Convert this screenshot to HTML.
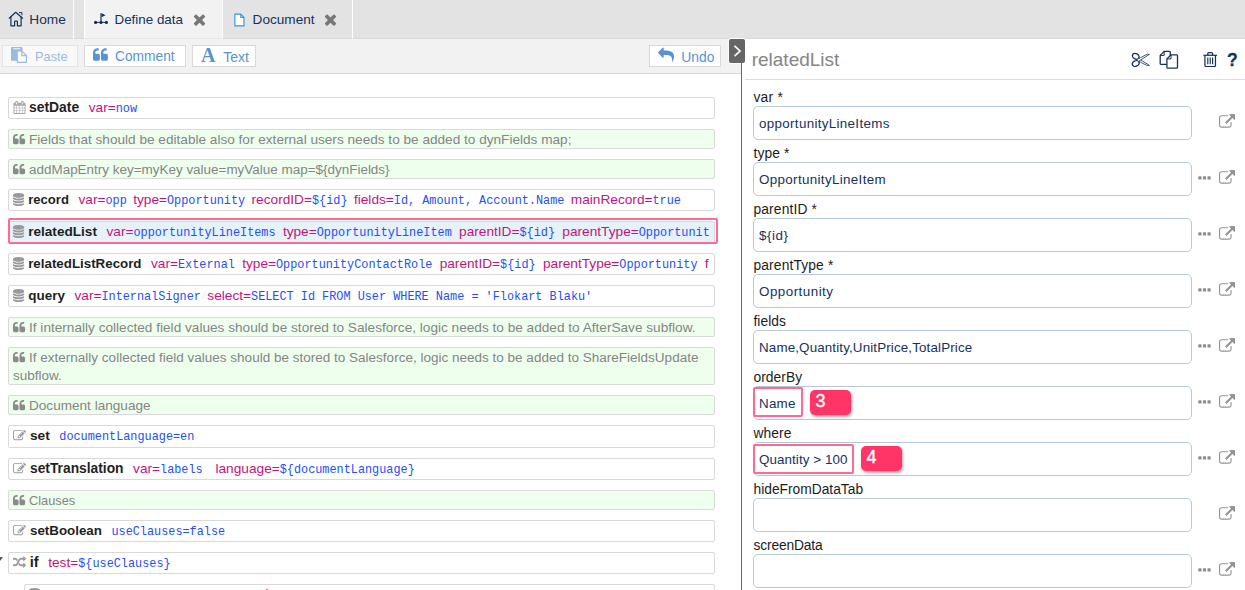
<!DOCTYPE html>
<html lang="en">
<head>
<meta charset="utf-8">
<title>Define data</title>
<style>
*{box-sizing:border-box;margin:0;padding:0}
html,body{width:1245px;height:590px;overflow:hidden;background:#fff}
body{position:relative;font-family:"Liberation Sans",sans-serif;font-size:13px;color:#222}
svg{display:block}
.abs{position:absolute}
#tabs{position:absolute;left:0;top:0;width:1245px;height:39px;background:#e3e3e3}
.tab{position:absolute;top:0;height:39px}
.tab.active{background:#f2f2f2}
.tab .lbl{position:absolute;top:11px;font-size:13.4px;line-height:18px;color:#16325c;white-space:nowrap}
#toolbar{position:absolute;left:0;top:39px;width:741px;height:34px;background:#f2f2f2}
#tline{position:absolute;left:0;top:38px;width:1245px;height:1px;background:rgba(0,0,0,.045)}
#bline{position:absolute;left:0;top:73px;width:741px;height:1px;background:#d8d8d8}
.btn{position:absolute;top:6px;height:22px;background:#fff;border:1px solid #d9d9d9;color:#5b92d4;font-size:13.5px;line-height:20px;white-space:nowrap}
.btn span{position:absolute;top:1px}
.btn.dis{opacity:.58}
.row{position:absolute;left:8px;width:707px;height:22px;border:1px solid #d9d9d9;border-radius:2px;background:#fff;white-space:nowrap;overflow:hidden}
.row.cm{height:20px;background:#eeffee;color:#858585}
.row.cm .t{position:absolute;left:4px;top:1px;line-height:18px;font-size:13.35px;white-space:normal;width:700px;text-indent:16px}
.row .l{position:absolute;left:19.6px;top:0;height:20px;line-height:19px;white-space:nowrap}
.row .n{font-weight:bold;font-size:13.6px;color:#1f1f1f;margin-right:9.5px}
.row .a{font-size:13.68px;color:#c2157c;margin-right:6.4px}
.row .a b{font-weight:normal;font-family:"Liberation Mono","DejaVu Sans Mono",monospace;font-size:11.85px;color:#2450f5}
.row.g7 .a{margin-right:7.3px}
.row.sel{background:#e6f1fa}
#title{position:absolute;left:751.7px;top:48px;font-size:19px;line-height:24px;color:#858585}
.lab{position:absolute;left:753.5px;font-size:13.8px;line-height:16px;color:#1c1c1c;white-space:nowrap}
.inp{position:absolute;left:753px;width:439px;height:34px;border:1px solid #b6c8d4;border-radius:5px;background:#fff;font-size:13.4px;line-height:32px;padding-left:5px;padding-top:0.5px;color:#16325c;white-space:nowrap}
.badge{position:absolute;width:41px;height:25px;border-radius:5px;background:#ff3567;color:#fff;font-size:18px;line-height:23px;padding-left:5.5px;-webkit-text-stroke:0.35px #fff;box-shadow:1px 2px 3px rgba(0,0,0,.35)}
.hl{position:absolute;border:2px solid #ff6b90;border-radius:2px}
</style>
</head>
<body>
<div id="tabs">
<div class="tab" style="left:0;width:74px;border-right:1px solid #fff">
<svg class="abs" style="left:8px;top:11px" width="16" height="17" viewBox="0 0 16 17" fill="none" stroke="#16325c" stroke-width="1.2" stroke-linejoin="round" stroke-linecap="round"><path d="M1.2 7.2 L7.7 1.3 L14.6 7.2"/><path d="M2.9 5.9 V14.8 H6.6 V10.8 a0.7 0.7 0 0 1 0.7 -0.7 H8.7 a0.7 0.7 0 0 1 0.7 0.7 V14.8 H13.1 V5.9"/><path d="M11.4 1.6 H13.9 V3.8" stroke-width="1"/></svg>
<span class="lbl" style="left:29.3px;font-size:13.7px">Home</span></div>
<div class="tab active" style="left:84px;width:139px;border-left:1px solid #fff;border-right:1px solid #fff">
<svg class="abs" style="left:9px;top:12px" width="15" height="13" viewBox="0 0 15 13"><g fill="#16325c"><circle cx="1.6" cy="10.4" r="1.6"/><circle cx="7" cy="10.4" r="1.6"/><circle cx="12.4" cy="10.4" r="1.6"/><rect x="1.5" y="9.9" width="11" height="1"/><rect x="6.4" y="1.2" width="1.2" height="9.3"/><path d="M7.5 1.2 L11.6 3.2 L7.5 5.3 Z"/></g></svg>
<span class="lbl" style="left:29.5px">Define data</span>
<svg class="abs" style="left:105.6px;top:10.9px" width="17" height="17" viewBox="0 0 1792 1792"><path fill="#777" d="M1490 1322q0 40-28 68l-136 136q-28 28-68 28t-68-28l-294-294-294 294q-28 28-68 28t-68-28l-136-136q-28-28-28-68t28-68l294-294-294-294q-28-28-28-68t28-68l136-136q28-28 68-28t68 28l294 294 294-294q28-28 68-28t68 28l136 136q28 28 28 68t-28 68l-294 294 294 294q28 28 28 68z"/></svg></div>
<div class="tab" style="left:222px;width:131px;border-left:1px solid #fff;border-right:1px solid #fff">
<svg class="abs" style="left:10px;top:12.5px" width="13" height="15" viewBox="0 0 13 15.8" fill="#fff" stroke="#2f96d8" stroke-width="1.2" stroke-linejoin="round"><path d="M1.6 1.2 H7.8 L11.2 4.6 V13.6 H1.6 Z"/><path d="M7.8 1.2 V4.6 H11.2" fill="none"/></svg>
<span class="lbl" style="left:29.6px;font-size:13.6px">Document</span>
<svg class="abs" style="left:99.2px;top:10.9px" width="17" height="17" viewBox="0 0 1792 1792"><path fill="#777" d="M1490 1322q0 40-28 68l-136 136q-28 28-68 28t-68-28l-294-294-294 294q-28 28-68 28t-68-28l-136-136q-28-28-28-68t28-68l294-294-294-294q-28-28-28-68t28-68l136-136q28-28 68-28t68 28l294 294 294-294q28-28 68-28t68 28l136 136q28 28 28 68t-28 68l-294 294 294 294q28 28 28 68z"/></svg></div>
</div>
<div id="toolbar">
<div class="btn dis" style="left:2px;width:76px"><svg class="abs" style="left:8px;top:1px" width="16" height="16" viewBox="0 0 1792 1792"><path fill="#5b92d4" d="M768 1664h896v-640h-416q-40 0-68-28t-28-68v-416h-384v1152zm256-1440v-64q0-13-9.500-22.500t-22.500-9.500h-704q-13 0-22.500 9.500t-9.500 22.500v64q0 13 9.500 22.500t22.500 9.500h704q13 0 22.500-9.500t9.500-22.500zm256 672h299l-299-299v299zm512 128v672q0 40-28 68t-68 28h-960q-40 0-68-28t-28-68v-160h-544q-40 0-68-28t-28-68v-1344q0-40 28-68t68-28h1088q40 0 68 28t28 68v328q21 13 36 28l408 408q28 28 48 76t20 88z"/></svg><span style="left:32px;font-size:12.8px">Paste</span></div>
<div class="btn" style="left:84px;width:102px"><svg class="abs" style="left:8px;top:1px" width="16" height="16" viewBox="0 0 1792 1792"><path fill="#5b92d4" d="M768 960v384q0 80-56 136t-136 56h-384q-80 0-136-56t-56-136v-704q0-104 40.500-198.500t109.500-163.500 163.500-109.500 198.500-40.500h64q26 0 45 19t19 45v128q0 26-19 45t-45 19h-64q-106 0-181 75t-75 181v32q0 40 28 68t68 28h224q80 0 136 56t56 136zM1664 960v384q0 80-56 136t-136 56h-384q-80 0-136-56t-56-136v-704q0-104 40.500-198.500t109.500-163.500 163.500-109.500 198.500-40.500h64q26 0 45 19t19 45v128q0 26-19 45t-45 19h-64q-106 0-181 75t-75 181v32q0 40 28 68t68 28h224q80 0 136 56t56 136z"/></svg><span style="left:30px;font-size:13.75px">Comment</span></div>
<div class="btn" style="left:192px;width:64px"><span style="left:8px;top:-2px;font-family:'Liberation Serif',serif;font-weight:bold;font-size:20px;line-height:22px">A</span><span style="left:30.3px;font-size:14px">Text</span></div>
<div class="btn" style="left:649px;width:72px"><svg class="abs" style="left:7.5px;top:1px" width="16" height="16" viewBox="0 0 1792 1792"><path fill="#5b92d4" d="M1792 1120q0 166-127 451-3 7-10.500 24t-13.500 30-13 22q-12 17-28 17-15 0-23.500-10t-8.500-25q0-9 2.500-26.500t2.500-23.500q5-68 5-123 0-101-17.500-181t-48.500-138.500-80-101-105.500-69.500-133-42.500-154-21.500-175.500-6h-224v256q0 26-19 45t-45 19-45-19l-512-512q-19-19-19-45t19-45l512-512q19-19 45-19t45 19 19 45v256h224q713 0 875 403 53 134 53 333z"/></svg><span style="left:31.3px;font-size:13.9px">Undo</span></div>
</div>
<div id="tline"></div><div id="bline"></div>
<div class="abs" style="left:729px;top:39px;width:16px;height:24px;background:#666;border-radius:2px;box-shadow:0 0 0 1px #fff">
<svg style="position:absolute;left:4px;top:6px" width="9" height="12" viewBox="0 0 9 12" fill="none" stroke="#fff" stroke-width="1.7"><path d="M1.5 0.8 L7 6 L1.5 11.2"/></svg></div>
<div class="abs" style="left:741px;top:62px;width:1px;height:528px;background:#686868"></div>
<div id="left">
<div class="row" style="top:97px"><svg class="abs" style="left:4px;top:3px" width="13" height="13" viewBox="0 0 1792 1792"><path fill="#a6a6a6" d="M192 1664h288v-288h-288v288zm352 0h320v-288h-320v288zm-352-352h288v-320h-288v320zm352 0h320v-320h-320v320zm-352-384h288v-288h-288v288zm736 736h320v-288h-320v288zm-384-736h320v-288h-320v288zm768 736h288v-288h-288v288zm-384-352h320v-320h-320v320zm-352-864v-288q0-13-9.500-22.500t-22.500-9.500h-64q-13 0-22.500 9.500t-9.500 22.500v288q0 13 9.500 22.500t22.500 9.500h64q13 0 22.500-9.500t9.500-22.500zm736 864h288v-320h-288v320zm-384-384h320v-288h-320v288zm384 0h288v-288h-288v288zm32-480v-288q0-13-9.500-22.500t-22.500-9.500h-64q-13 0-22.500 9.500t-9.500 22.500v288q0 13 9.500 22.500t22.500 9.500h64q13 0 22.500-9.500t9.500-22.500zm384-64v1280q0 52-38 90t-90 38h-1408q-52 0-90-38t-38-90v-1280q0-52 38-90t90-38h128v-96q0-66 47-113t113-47h64q66 0 113 47t47 113v96h384v-96q0-66 47-113t113-47h64q66 0 113 47t47 113v96h128q52 0 90 38t38 90z"/></svg><span class="l" style="left:20px"><span class="n" style="font-size:13.9px">setDate</span><span class="a">var=<b>now</b></span></span></div>
<div class="row cm" style="top:129px"><svg class="abs" style="left:4px;top:3px" width="13" height="13" viewBox="0 0 1792 1792"><path fill="#8a8a8a" d="M768 960v384q0 80-56 136t-136 56h-384q-80 0-136-56t-56-136v-704q0-104 40.500-198.500t109.500-163.500 163.500-109.500 198.500-40.500h64q26 0 45 19t19 45v128q0 26-19 45t-45 19h-64q-106 0-181 75t-75 181v32q0 40 28 68t68 28h224q80 0 136 56t56 136zM1664 960v384q0 80-56 136t-136 56h-384q-80 0-136-56t-56-136v-704q0-104 40.500-198.500t109.500-163.500 163.500-109.500 198.500-40.500h64q26 0 45 19t19 45v128q0 26-19 45t-45 19h-64q-106 0-181 75t-75 181v32q0 40 28 68t68 28h224q80 0 136 56t56 136z"/></svg><span class="t" style="font-size:13.61px">Fields that should be editable also for external users needs to be added to dynFields map;</span></div>
<div class="row cm" style="top:159px"><svg class="abs" style="left:4px;top:3px" width="13" height="13" viewBox="0 0 1792 1792"><path fill="#8a8a8a" d="M768 960v384q0 80-56 136t-136 56h-384q-80 0-136-56t-56-136v-704q0-104 40.500-198.500t109.500-163.500 163.500-109.500 198.500-40.500h64q26 0 45 19t19 45v128q0 26-19 45t-45 19h-64q-106 0-181 75t-75 181v32q0 40 28 68t68 28h224q80 0 136 56t56 136zM1664 960v384q0 80-56 136t-136 56h-384q-80 0-136-56t-56-136v-704q0-104 40.500-198.500t109.500-163.500 163.500-109.500 198.500-40.500h64q26 0 45 19t19 45v128q0 26-19 45t-45 19h-64q-106 0-181 75t-75 181v32q0 40 28 68t68 28h224q80 0 136 56t56 136z"/></svg><span class="t" style="font-size:13.46px">addMapEntry key=myKey value=myValue map=${dynFields}</span></div>
<div class="row" style="top:189px"><svg class="abs" style="left:4px;top:3px" width="13" height="13" viewBox="0 0 1792 1792"><path fill="#9a9a9a" d="M768 768q237 0 443-43t325-127v170q0 69-103 128t-280 93.500-385 34.500-385-34.500-280-93.500-103-128v-170q119 84 325 127t443 43zm0 768q237 0 443-43t325-127v170q0 69-103 128t-280 93.500-385 34.500-385-34.500-280-93.500-103-128v-170q119 84 325 127t443 43zm0-384q237 0 443-43t325-127v170q0 69-103 128t-280 93.500-385 34.500-385-34.500-280-93.500-103-128v-170q119 84 325 127t443 43zm0-1152q208 0 385 34.500t280 93.500 103 128v128q0 69-103 128t-280 93.500-385 34.500-385-34.500-280-93.500-103-128v-128q0-69 103-128t280-93.500 385-34.500z"/></svg><span class="l" style="left:19.2px"><span class="n" style="font-size:13.1px">record</span><span class="a">var=<b>opp</b></span><span class="a">type=<b>Opportunity</b></span><span class="a">recordID=<b>${id}</b></span><span class="a">fields=<b>Id, Amount, Account.Name</b></span><span class="a">mainRecord=<b>true</b></span></span></div>
<div class="row sel g7" style="top:221px"><svg class="abs" style="left:4px;top:3px" width="13" height="13" viewBox="0 0 1792 1792"><path fill="#9a9a9a" d="M768 768q237 0 443-43t325-127v170q0 69-103 128t-280 93.500-385 34.500-385-34.500-280-93.500-103-128v-170q119 84 325 127t443 43zm0 768q237 0 443-43t325-127v170q0 69-103 128t-280 93.500-385 34.500-385-34.500-280-93.500-103-128v-170q119 84 325 127t443 43zm0-384q237 0 443-43t325-127v170q0 69-103 128t-280 93.500-385 34.500-385-34.500-280-93.500-103-128v-170q119 84 325 127t443 43zm0-1152q208 0 385 34.500t280 93.500 103 128v128q0 69-103 128t-280 93.500-385 34.500-385-34.500-280-93.500-103-128v-128q0-69 103-128t280-93.500 385-34.500z"/></svg><span class="l" style="left:19.2px"><span class="n" style="font-size:13.6px">relatedList</span><span class="a">var=<b>opportunityLineItems</b></span><span class="a">type=<b>OpportunityLineItem</b></span><span class="a">parentID=<b>${id}</b></span><span class="a">parentType=<b>Opportunit</b></span></span></div>
<div class="row g7" style="top:253px"><svg class="abs" style="left:4px;top:3px" width="13" height="13" viewBox="0 0 1792 1792"><path fill="#9a9a9a" d="M768 768q237 0 443-43t325-127v170q0 69-103 128t-280 93.500-385 34.500-385-34.500-280-93.500-103-128v-170q119 84 325 127t443 43zm0 768q237 0 443-43t325-127v170q0 69-103 128t-280 93.500-385 34.500-385-34.500-280-93.500-103-128v-170q119 84 325 127t443 43zm0-384q237 0 443-43t325-127v170q0 69-103 128t-280 93.500-385 34.500-385-34.500-280-93.500-103-128v-170q119 84 325 127t443 43zm0-1152q208 0 385 34.500t280 93.500 103 128v128q0 69-103 128t-280 93.500-385 34.500-385-34.500-280-93.500-103-128v-128q0-69 103-128t280-93.500 385-34.500z"/></svg><span class="l" style="left:19.2px"><span class="n" style="font-size:13.33px">relatedListRecord</span><span class="a">var=<b>External</b></span><span class="a">type=<b>OpportunityContactRole</b></span><span class="a">parentID=<b>${id}</b></span><span class="a">parentType=<b>Opportunity</b></span><span class="a">f<b></b></span></span></div>
<div class="row" style="top:285px"><svg class="abs" style="left:4px;top:3px" width="13" height="13" viewBox="0 0 1792 1792"><path fill="#9a9a9a" d="M768 768q237 0 443-43t325-127v170q0 69-103 128t-280 93.500-385 34.500-385-34.500-280-93.500-103-128v-170q119 84 325 127t443 43zm0 768q237 0 443-43t325-127v170q0 69-103 128t-280 93.500-385 34.500-385-34.500-280-93.500-103-128v-170q119 84 325 127t443 43zm0-384q237 0 443-43t325-127v170q0 69-103 128t-280 93.500-385 34.500-385-34.500-280-93.500-103-128v-170q119 84 325 127t443 43zm0-1152q208 0 385 34.500t280 93.500 103 128v128q0 69-103 128t-280 93.500-385 34.500-385-34.500-280-93.500-103-128v-128q0-69 103-128t280-93.500 385-34.500z"/></svg><span class="l" style="left:19.2px"><span class="n" style="font-size:13.5px">query</span><span class="a">var=<b>InternalSigner</b></span><span class="a">select=<b>SELECT Id FROM User WHERE Name = 'Flokart Blaku'</b></span></span></div>
<div class="row cm" style="top:317px"><svg class="abs" style="left:4px;top:3px" width="13" height="13" viewBox="0 0 1792 1792"><path fill="#8a8a8a" d="M768 960v384q0 80-56 136t-136 56h-384q-80 0-136-56t-56-136v-704q0-104 40.500-198.500t109.500-163.500 163.500-109.500 198.500-40.500h64q26 0 45 19t19 45v128q0 26-19 45t-45 19h-64q-106 0-181 75t-75 181v32q0 40 28 68t68 28h224q80 0 136 56t56 136zM1664 960v384q0 80-56 136t-136 56h-384q-80 0-136-56t-56-136v-704q0-104 40.500-198.500t109.500-163.500 163.500-109.500 198.500-40.500h64q26 0 45 19t19 45v128q0 26-19 45t-45 19h-64q-106 0-181 75t-75 181v32q0 40 28 68t68 28h224q80 0 136 56t56 136z"/></svg><span class="t" style="font-size:13.63px">If internally collected field values should be stored to Salesforce, logic needs to be added to AfterSave subflow.</span></div>
<div class="row cm" style="top:347px;height:38px"><svg class="abs" style="left:4px;top:3px" width="13" height="13" viewBox="0 0 1792 1792"><path fill="#8a8a8a" d="M768 960v384q0 80-56 136t-136 56h-384q-80 0-136-56t-56-136v-704q0-104 40.500-198.500t109.500-163.500 163.500-109.500 198.500-40.500h64q26 0 45 19t19 45v128q0 26-19 45t-45 19h-64q-106 0-181 75t-75 181v32q0 40 28 68t68 28h224q80 0 136 56t56 136zM1664 960v384q0 80-56 136t-136 56h-384q-80 0-136-56t-56-136v-704q0-104 40.500-198.500t109.500-163.500 163.500-109.500 198.500-40.500h64q26 0 45 19t19 45v128q0 26-19 45t-45 19h-64q-106 0-181 75t-75 181v32q0 40 28 68t68 28h224q80 0 136 56t56 136z"/></svg><span class="t" style="font-size:13.53px">If externally collected field values should be stored to Salesforce, logic needs to be added to ShareFieldsUpdate subflow.</span></div>
<div class="row cm" style="top:395px"><svg class="abs" style="left:4px;top:3px" width="13" height="13" viewBox="0 0 1792 1792"><path fill="#8a8a8a" d="M768 960v384q0 80-56 136t-136 56h-384q-80 0-136-56t-56-136v-704q0-104 40.500-198.500t109.500-163.500 163.500-109.500 198.500-40.500h64q26 0 45 19t19 45v128q0 26-19 45t-45 19h-64q-106 0-181 75t-75 181v32q0 40 28 68t68 28h224q80 0 136 56t56 136zM1664 960v384q0 80-56 136t-136 56h-384q-80 0-136-56t-56-136v-704q0-104 40.500-198.500t109.500-163.500 163.500-109.500 198.500-40.500h64q26 0 45 19t19 45v128q0 26-19 45t-45 19h-64q-106 0-181 75t-75 181v32q0 40 28 68t68 28h224q80 0 136 56t56 136z"/></svg><span class="t" style="font-size:13.58px">Document language</span></div>
<div class="row" style="top:425px;height:23px"><svg class="abs" style="left:4px;top:3px" width="13" height="13" viewBox="0 0 1792 1792"><path fill="#9a9a9a" d="M888 1184l116-116-152-152-116 116v56h96v96h56zm440-720q-16-16-33 1l-350 350q-17 17-1 33t33-1l350-350q17-17 1-33zm80 594v190q0 119-84.500 203.500t-203.500 84.500h-832q-119 0-203.500-84.500t-84.500-203.500v-832q0-119 84.500-203.500t203.500-84.500h832q63 0 117 25 15 7 18 23 3 17-9 29l-49 49q-14 14-32 8-23-6-45-6h-832q-66 0-113 47t-47 113v832q0 66 47 113t113 47h832q66 0 113-47t47-113v-126q0-13 9-22l64-64q15-15 35-7t20 29zm-96-738l288 288-672 672h-288v-288zm444 132l-92 92-288-288 92-92q28-28 68-28t68 28l152 152q28 28 28 68t-28 68z"/></svg><span class="l" style="left:21px"><span class="n" style="font-size:13.7px">set</span><span class="a"><b>documentLanguage=en</b></span></span></div>
<div class="row" style="top:458px"><svg class="abs" style="left:4px;top:3px" width="13" height="13" viewBox="0 0 1792 1792"><path fill="#9a9a9a" d="M888 1184l116-116-152-152-116 116v56h96v96h56zm440-720q-16-16-33 1l-350 350q-17 17-1 33t33-1l350-350q17-17 1-33zm80 594v190q0 119-84.500 203.500t-203.500 84.500h-832q-119 0-203.500-84.500t-84.500-203.500v-832q0-119 84.500-203.500t203.500-84.500h832q63 0 117 25 15 7 18 23 3 17-9 29l-49 49q-14 14-32 8-23-6-45-6h-832q-66 0-113 47t-47 113v832q0 66 47 113t113 47h832q66 0 113-47t47-113v-126q0-13 9-22l64-64q15-15 35-7t20 29zm-96-738l288 288-672 672h-288v-288zm444 132l-92 92-288-288 92-92q28-28 68-28t68 28l152 152q28 28 28 68t-28 68z"/></svg><span class="l" style="left:21px"><span class="n" style="font-size:13.8px">setTranslation</span><span class="a">var=<b>labels</b></span><span class="a" style="margin-left:6.4px">language=<b>${documentLanguage}</b></span></span></div>
<div class="row cm" style="top:490px"><svg class="abs" style="left:4px;top:3px" width="13" height="13" viewBox="0 0 1792 1792"><path fill="#8a8a8a" d="M768 960v384q0 80-56 136t-136 56h-384q-80 0-136-56t-56-136v-704q0-104 40.500-198.500t109.500-163.500 163.500-109.500 198.500-40.500h64q26 0 45 19t19 45v128q0 26-19 45t-45 19h-64q-106 0-181 75t-75 181v32q0 40 28 68t68 28h224q80 0 136 56t56 136zM1664 960v384q0 80-56 136t-136 56h-384q-80 0-136-56t-56-136v-704q0-104 40.500-198.500t109.500-163.500 163.500-109.500 198.500-40.500h64q26 0 45 19t19 45v128q0 26-19 45t-45 19h-64q-106 0-181 75t-75 181v32q0 40 28 68t68 28h224q80 0 136 56t56 136z"/></svg><span class="t" style="font-size:12.8px">Clauses</span></div>
<div class="row" style="top:520px"><svg class="abs" style="left:4px;top:3px" width="13" height="13" viewBox="0 0 1792 1792"><path fill="#9a9a9a" d="M888 1184l116-116-152-152-116 116v56h96v96h56zm440-720q-16-16-33 1l-350 350q-17 17-1 33t33-1l350-350q17-17 1-33zm80 594v190q0 119-84.500 203.500t-203.500 84.500h-832q-119 0-203.500-84.500t-84.500-203.500v-832q0-119 84.500-203.500t203.500-84.500h832q63 0 117 25 15 7 18 23 3 17-9 29l-49 49q-14 14-32 8-23-6-45-6h-832q-66 0-113 47t-47 113v832q0 66 47 113t113 47h832q66 0 113-47t47-113v-126q0-13 9-22l64-64q15-15 35-7t20 29zm-96-738l288 288-672 672h-288v-288zm444 132l-92 92-288-288 92-92q28-28 68-28t68 28l152 152q28 28 28 68t-28 68z"/></svg><span class="l" style="left:21px"><span class="n" style="font-size:13.35px">setBoolean</span><span class="a"><b>useClauses=false</b></span></span></div>
<div class="row" style="top:552px"><svg class="abs" style="left:4px;top:3px" width="13" height="13" viewBox="0 0 1792 1792"><path fill="#9a9a9a" d="M666 481q-60 92-137 273-22-45-37-72.500t-40.500-63.500-51-56.500-63-35-81.500-14.500h-224q-14 0-23-9t-9-23v-192q0-14 9-23t23-9h224q250 0 410 225zm1126 799q0 14-9 23l-320 320q-9 9-23 9-13 0-22.500-9.500t-9.500-22.500v-192q-32 0-85 .5t-81 1-73-1-71-5-64-10.500-63-18.500-58-28.500-59-40-55-53.500-56-69.500q59-93 136-273 22 45 37 72.500t40.500 63.500 51 56.500 63 35 81.500 14.500h256v-192q0-14 9-23t23-9q12 0 24 10l319 319q9 9 9 23zm0-896q0 14-9 23l-320 320q-9 9-23 9-13 0-22.500-9.500t-9.500-22.500v-192h-256q-48 0-87 15t-69 45-51 61.500-45 77.500q-32 62-78 171-29 66-49.500 111t-54 105-64 100-74 83-90 68.500-106.500 42-128 16.500h-224q-14 0-23-9t-9-23v-192q0-14 9-23t23-9h224q48 0 87-15t69-45 51-61.500 45-77.500q32-62 78-171 29-66 49.500-111t54-105 64-100 74-83 90-68.500 106.500-42 128-16.500h256v-192q0-14 9-23t23-9q12 0 24 10l319 319q9 9 9 23z"/></svg><span class="l" style="left:20.7px"><span class="n" style="font-size:14.7px">if</span><span class="a">test=<b>${useClauses}</b></span></span></div>
<div class="hl" style="left:8px;top:218px;width:710px;height:26px"></div>
<div class="abs" style="left:0;top:557px;width:0;height:0;border-left:0 solid transparent;border-right:3.5px solid transparent;border-top:4px solid #555"></div>
<div class="row" style="left:24px;top:584px;width:691px"><svg class="abs" style="left:4px;top:3px" width="13" height="13" viewBox="0 0 1792 1792"><path fill="#9a9a9a" d="M768 768q237 0 443-43t325-127v170q0 69-103 128t-280 93.500-385 34.500-385-34.500-280-93.500-103-128v-170q119 84 325 127t443 43zm0 768q237 0 443-43t325-127v170q0 69-103 128t-280 93.500-385 34.500-385-34.500-280-93.500-103-128v-170q119 84 325 127t443 43zm0-384q237 0 443-43t325-127v170q0 69-103 128t-280 93.500-385 34.500-385-34.500-280-93.500-103-128v-170q119 84 325 127t443 43zm0-1152q208 0 385 34.500t280 93.500 103 128v128q0 69-103 128t-280 93.500-385 34.500-385-34.500-280-93.500-103-128v-128q0-69 103-128t280-93.500 385-34.500z"/></svg></div>
<div class="abs" style="left:266px;top:588.5px;width:1.5px;height:1.5px;background:#e66"></div>
</div>
<div id="right">
<div id="title">relatedList</div>
<svg class="abs" style="left:1131px;top:52px" width="20" height="16" viewBox="0 0 20 16" fill="none" stroke="#16325c"><ellipse cx="4.7" cy="4.3" rx="3.5" ry="2.7" transform="rotate(28 4.7 4.3)" stroke-width="1.3"/><ellipse cx="4.7" cy="11.5" rx="3.5" ry="2.7" transform="rotate(-28 4.7 11.5)" stroke-width="1.3"/><path d="M7.4 6.4 L18.4 13.4 L16.2 13.6 L6.6 8.6" stroke-width="0.8" stroke-linejoin="round" fill="#fff"/><path d="M7.4 9.4 L18.4 2.4 L16.2 2.2 L6.6 7.2" stroke-width="0.8" stroke-linejoin="round" fill="#fff"/></svg>
<svg class="abs" style="left:1159px;top:50px" width="20" height="19" viewBox="0 0 20 19" fill="#fff" stroke="#16325c" stroke-width="1.3" stroke-linejoin="round"><path d="M5.2 1.4 H10.4 a0.9 0.9 0 0 1 0.9 0.9 V13.4 a0.9 0.9 0 0 1 -0.9 0.9 H2.1 a0.9 0.9 0 0 1 -0.9 -0.9 V5.4 Z"/><path d="M5.2 1.4 V5.4 H1.2" fill="none" stroke-width="1"/><path d="M12 4.8 H17.6 a0.9 0.9 0 0 1 0.9 0.9 V17.2 a0.9 0.9 0 0 1 -0.9 0.9 H8.8 a0.9 0.9 0 0 1 -0.9 -0.9 V8.9 Z"/><path d="M12 4.8 V8.9 H7.9" fill="none" stroke-width="1"/></svg>
<svg class="abs" style="left:1202.8px;top:51.5px" width="14.4" height="15.4" viewBox="0 0 15 16" fill="none" stroke="#16325c" stroke-width="1.3"><path d="M0.4 3.4 H14.6"/><path d="M5 3.2 V1.6 a0.9 0.9 0 0 1 0.9 -0.9 H9.1 a0.9 0.9 0 0 1 0.9 0.9 V3.2"/><path d="M2 3.6 V13.8 a1.4 1.4 0 0 0 1.4 1.4 H11.6 a1.4 1.4 0 0 0 1.4 -1.4 V3.6"/><path d="M5 5.8 V12.8 M7.5 5.8 V12.8 M10 5.8 V12.8" stroke-width="1.2"/></svg>
<div class="abs" style="left:1227px;top:50px;font-weight:bold;font-size:17.5px;-webkit-text-stroke:0.3px #16325c;line-height:20px;color:#16325c">?</div>
<div class="abs" style="left:745px;top:79px;width:500px;height:1px;background:#ddd"></div>
<div class="lab" style="top:90px;letter-spacing:0.225px"><span>var *</span></div>
<div class="inp" style="top:106px;letter-spacing:0.319px"><span>opportunityLineItems</span></div>
<svg class="abs" style="left:1218.5px;top:114px" width="16" height="16" viewBox="0 0 1792 1792"><path fill="#929292" d="M1408 928v320q0 119-84.500 203.500t-203.500 84.500h-832q-119 0-203.500-84.500t-84.500-203.500v-832q0-119 84.500-203.500t203.500-84.500h704q14 0 23 9t9 23v64q0 14-9 23t-23 9h-704q-66 0-113 47t-47 113v832q0 66 47 113t113 47h832q66 0 113-47t47-113v-320q0-14 9-23t23-9h64q14 0 23 9t9 23zm384-864v512q0 26-19 45t-45 19-45-19l-176-176-652 652q-10 10-23 10t-23-10l-114-114q-10-10-10-23t10-23l652-652-176-176q-19-19-19-45t19-45 45-19h512q26 0 45 19t19 45z"/></svg>
<div class="lab" style="top:146px;letter-spacing:0.12px"><span>type *</span></div>
<div class="inp" style="top:162px;letter-spacing:0.337px"><span>OpportunityLineItem</span></div>
<svg class="abs" style="left:1198px;top:176px" width="14" height="4" viewBox="0 0 14 4" fill="#8e8e8e"><rect x="0.3" y="0.3" width="3.2" height="3.2" rx="0.6"/><rect x="4.9" y="0.3" width="3.2" height="3.2" rx="0.6"/><rect x="9.5" y="0.3" width="3.2" height="3.2" rx="0.6"/></svg>
<svg class="abs" style="left:1218.5px;top:170px" width="16" height="16" viewBox="0 0 1792 1792"><path fill="#929292" d="M1408 928v320q0 119-84.500 203.500t-203.500 84.500h-832q-119 0-203.500-84.500t-84.500-203.500v-832q0-119 84.500-203.500t203.500-84.500h704q14 0 23 9t9 23v64q0 14-9 23t-23 9h-704q-66 0-113 47t-47 113v832q0 66 47 113t113 47h832q66 0 113-47t47-113v-320q0-14 9-23t23-9h64q14 0 23 9t9 23zm384-864v512q0 26-19 45t-45 19-45-19l-176-176-652 652q-10 10-23 10t-23-10l-114-114q-10-10-10-23t10-23l652-652-176-176q-19-19-19-45t19-45 45-19h512q26 0 45 19t19 45z"/></svg>
<div class="lab" style="top:202px;letter-spacing:0.138px"><span>parentID *</span></div>
<div class="inp" style="top:218px;letter-spacing:0.534px"><span>${id}</span></div>
<svg class="abs" style="left:1198px;top:232px" width="14" height="4" viewBox="0 0 14 4" fill="#8e8e8e"><rect x="0.3" y="0.3" width="3.2" height="3.2" rx="0.6"/><rect x="4.9" y="0.3" width="3.2" height="3.2" rx="0.6"/><rect x="9.5" y="0.3" width="3.2" height="3.2" rx="0.6"/></svg>
<svg class="abs" style="left:1218.5px;top:226px" width="16" height="16" viewBox="0 0 1792 1792"><path fill="#929292" d="M1408 928v320q0 119-84.500 203.500t-203.500 84.500h-832q-119 0-203.500-84.500t-84.500-203.500v-832q0-119 84.500-203.500t203.500-84.500h704q14 0 23 9t9 23v64q0 14-9 23t-23 9h-704q-66 0-113 47t-47 113v832q0 66 47 113t113 47h832q66 0 113-47t47-113v-320q0-14 9-23t23-9h64q14 0 23 9t9 23zm384-864v512q0 26-19 45t-45 19-45-19l-176-176-652 652q-10 10-23 10t-23-10l-114-114q-10-10-10-23t10-23l652-652-176-176q-19-19-19-45t19-45 45-19h512q26 0 45 19t19 45z"/></svg>
<div class="lab" style="top:258px;letter-spacing:0.139px"><span>parentType *</span></div>
<div class="inp" style="top:274px;letter-spacing:0.479px"><span>Opportunity</span></div>
<svg class="abs" style="left:1198px;top:288px" width="14" height="4" viewBox="0 0 14 4" fill="#8e8e8e"><rect x="0.3" y="0.3" width="3.2" height="3.2" rx="0.6"/><rect x="4.9" y="0.3" width="3.2" height="3.2" rx="0.6"/><rect x="9.5" y="0.3" width="3.2" height="3.2" rx="0.6"/></svg>
<svg class="abs" style="left:1218.5px;top:282px" width="16" height="16" viewBox="0 0 1792 1792"><path fill="#929292" d="M1408 928v320q0 119-84.500 203.500t-203.500 84.500h-832q-119 0-203.500-84.500t-84.500-203.500v-832q0-119 84.500-203.500t203.500-84.500h704q14 0 23 9t9 23v64q0 14-9 23t-23 9h-704q-66 0-113 47t-47 113v832q0 66 47 113t113 47h832q66 0 113-47t47-113v-320q0-14 9-23t23-9h64q14 0 23 9t9 23zm384-864v512q0 26-19 45t-45 19-45-19l-176-176-652 652q-10 10-23 10t-23-10l-114-114q-10-10-10-23t10-23l652-652-176-176q-19-19-19-45t19-45 45-19h512q26 0 45 19t19 45z"/></svg>
<div class="lab" style="top:314px;letter-spacing:0.03px"><span>fields</span></div>
<div class="inp" style="top:330px;letter-spacing:0.13px"><span>Name,Quantity,UnitPrice,TotalPrice</span></div>
<svg class="abs" style="left:1198px;top:344px" width="14" height="4" viewBox="0 0 14 4" fill="#8e8e8e"><rect x="0.3" y="0.3" width="3.2" height="3.2" rx="0.6"/><rect x="4.9" y="0.3" width="3.2" height="3.2" rx="0.6"/><rect x="9.5" y="0.3" width="3.2" height="3.2" rx="0.6"/></svg>
<svg class="abs" style="left:1218.5px;top:338px" width="16" height="16" viewBox="0 0 1792 1792"><path fill="#929292" d="M1408 928v320q0 119-84.500 203.500t-203.500 84.500h-832q-119 0-203.500-84.500t-84.500-203.500v-832q0-119 84.500-203.500t203.500-84.500h704q14 0 23 9t9 23v64q0 14-9 23t-23 9h-704q-66 0-113 47t-47 113v832q0 66 47 113t113 47h832q66 0 113-47t47-113v-320q0-14 9-23t23-9h64q14 0 23 9t9 23zm384-864v512q0 26-19 45t-45 19-45-19l-176-176-652 652q-10 10-23 10t-23-10l-114-114q-10-10-10-23t10-23l652-652-176-176q-19-19-19-45t19-45 45-19h512q26 0 45 19t19 45z"/></svg>
<div class="lab" style="top:370px;letter-spacing:0.041px"><span>orderBy</span></div>
<div class="inp" style="top:386px;letter-spacing:0.216px"><span>Name</span></div>
<svg class="abs" style="left:1198px;top:400px" width="14" height="4" viewBox="0 0 14 4" fill="#8e8e8e"><rect x="0.3" y="0.3" width="3.2" height="3.2" rx="0.6"/><rect x="4.9" y="0.3" width="3.2" height="3.2" rx="0.6"/><rect x="9.5" y="0.3" width="3.2" height="3.2" rx="0.6"/></svg>
<svg class="abs" style="left:1218.5px;top:394px" width="16" height="16" viewBox="0 0 1792 1792"><path fill="#929292" d="M1408 928v320q0 119-84.500 203.500t-203.500 84.500h-832q-119 0-203.500-84.500t-84.500-203.500v-832q0-119 84.500-203.500t203.500-84.500h704q14 0 23 9t9 23v64q0 14-9 23t-23 9h-704q-66 0-113 47t-47 113v832q0 66 47 113t113 47h832q66 0 113-47t47-113v-320q0-14 9-23t23-9h64q14 0 23 9t9 23zm384-864v512q0 26-19 45t-45 19-45-19l-176-176-652 652q-10 10-23 10t-23-10l-114-114q-10-10-10-23t10-23l652-652-176-176q-19-19-19-45t19-45 45-19h512q26 0 45 19t19 45z"/></svg>
<div class="lab" style="top:426px;letter-spacing:0.084px"><span>where</span></div>
<div class="inp" style="top:442px;letter-spacing:0.073px"><span>Quantity &gt; 100</span></div>
<svg class="abs" style="left:1198px;top:456px" width="14" height="4" viewBox="0 0 14 4" fill="#8e8e8e"><rect x="0.3" y="0.3" width="3.2" height="3.2" rx="0.6"/><rect x="4.9" y="0.3" width="3.2" height="3.2" rx="0.6"/><rect x="9.5" y="0.3" width="3.2" height="3.2" rx="0.6"/></svg>
<svg class="abs" style="left:1218.5px;top:450px" width="16" height="16" viewBox="0 0 1792 1792"><path fill="#929292" d="M1408 928v320q0 119-84.500 203.500t-203.500 84.500h-832q-119 0-203.500-84.500t-84.500-203.500v-832q0-119 84.500-203.500t203.500-84.500h704q14 0 23 9t9 23v64q0 14-9 23t-23 9h-704q-66 0-113 47t-47 113v832q0 66 47 113t113 47h832q66 0 113-47t47-113v-320q0-14 9-23t23-9h64q14 0 23 9t9 23zm384-864v512q0 26-19 45t-45 19-45-19l-176-176-652 652q-10 10-23 10t-23-10l-114-114q-10-10-10-23t10-23l652-652-176-176q-19-19-19-45t19-45 45-19h512q26 0 45 19t19 45z"/></svg>
<div class="lab" style="top:482px;letter-spacing:-0.005px"><span>hideFromDataTab</span></div>
<div class="inp" style="top:498px;letter-spacing:0px"><span></span></div>
<svg class="abs" style="left:1218.5px;top:506px" width="16" height="16" viewBox="0 0 1792 1792"><path fill="#929292" d="M1408 928v320q0 119-84.500 203.500t-203.500 84.500h-832q-119 0-203.500-84.500t-84.500-203.500v-832q0-119 84.500-203.500t203.500-84.500h704q14 0 23 9t9 23v64q0 14-9 23t-23 9h-704q-66 0-113 47t-47 113v832q0 66 47 113t113 47h832q66 0 113-47t47-113v-320q0-14 9-23t23-9h64q14 0 23 9t9 23zm384-864v512q0 26-19 45t-45 19-45-19l-176-176-652 652q-10 10-23 10t-23-10l-114-114q-10-10-10-23t10-23l652-652-176-176q-19-19-19-45t19-45 45-19h512q26 0 45 19t19 45z"/></svg>
<div class="lab" style="top:538px;letter-spacing:-0.166px"><span>screenData</span></div>
<div class="inp" style="top:554px;letter-spacing:0px"><span></span></div>
<svg class="abs" style="left:1198px;top:568px" width="14" height="4" viewBox="0 0 14 4" fill="#8e8e8e"><rect x="0.3" y="0.3" width="3.2" height="3.2" rx="0.6"/><rect x="4.9" y="0.3" width="3.2" height="3.2" rx="0.6"/><rect x="9.5" y="0.3" width="3.2" height="3.2" rx="0.6"/></svg>
<svg class="abs" style="left:1218.5px;top:562px" width="16" height="16" viewBox="0 0 1792 1792"><path fill="#929292" d="M1408 928v320q0 119-84.500 203.500t-203.500 84.500h-832q-119 0-203.500-84.500t-84.500-203.500v-832q0-119 84.500-203.500t203.500-84.500h704q14 0 23 9t9 23v64q0 14-9 23t-23 9h-704q-66 0-113 47t-47 113v832q0 66 47 113t113 47h832q66 0 113-47t47-113v-320q0-14 9-23t23-9h64q14 0 23 9t9 23zm384-864v512q0 26-19 45t-45 19-45-19l-176-176-652 652q-10 10-23 10t-23-10l-114-114q-10-10-10-23t10-23l652-652-176-176q-19-19-19-45t19-45 45-19h512q26 0 45 19t19 45z"/></svg>
<div class="hl" style="left:753px;top:387px;width:50px;height:30px"></div>
<div class="badge" style="left:810px;top:390px">3</div>
<div class="hl" style="left:753px;top:443.6px;width:101px;height:30px"></div>
<div class="badge" style="left:861px;top:446px">4</div>
</div>
</body>
</html>
